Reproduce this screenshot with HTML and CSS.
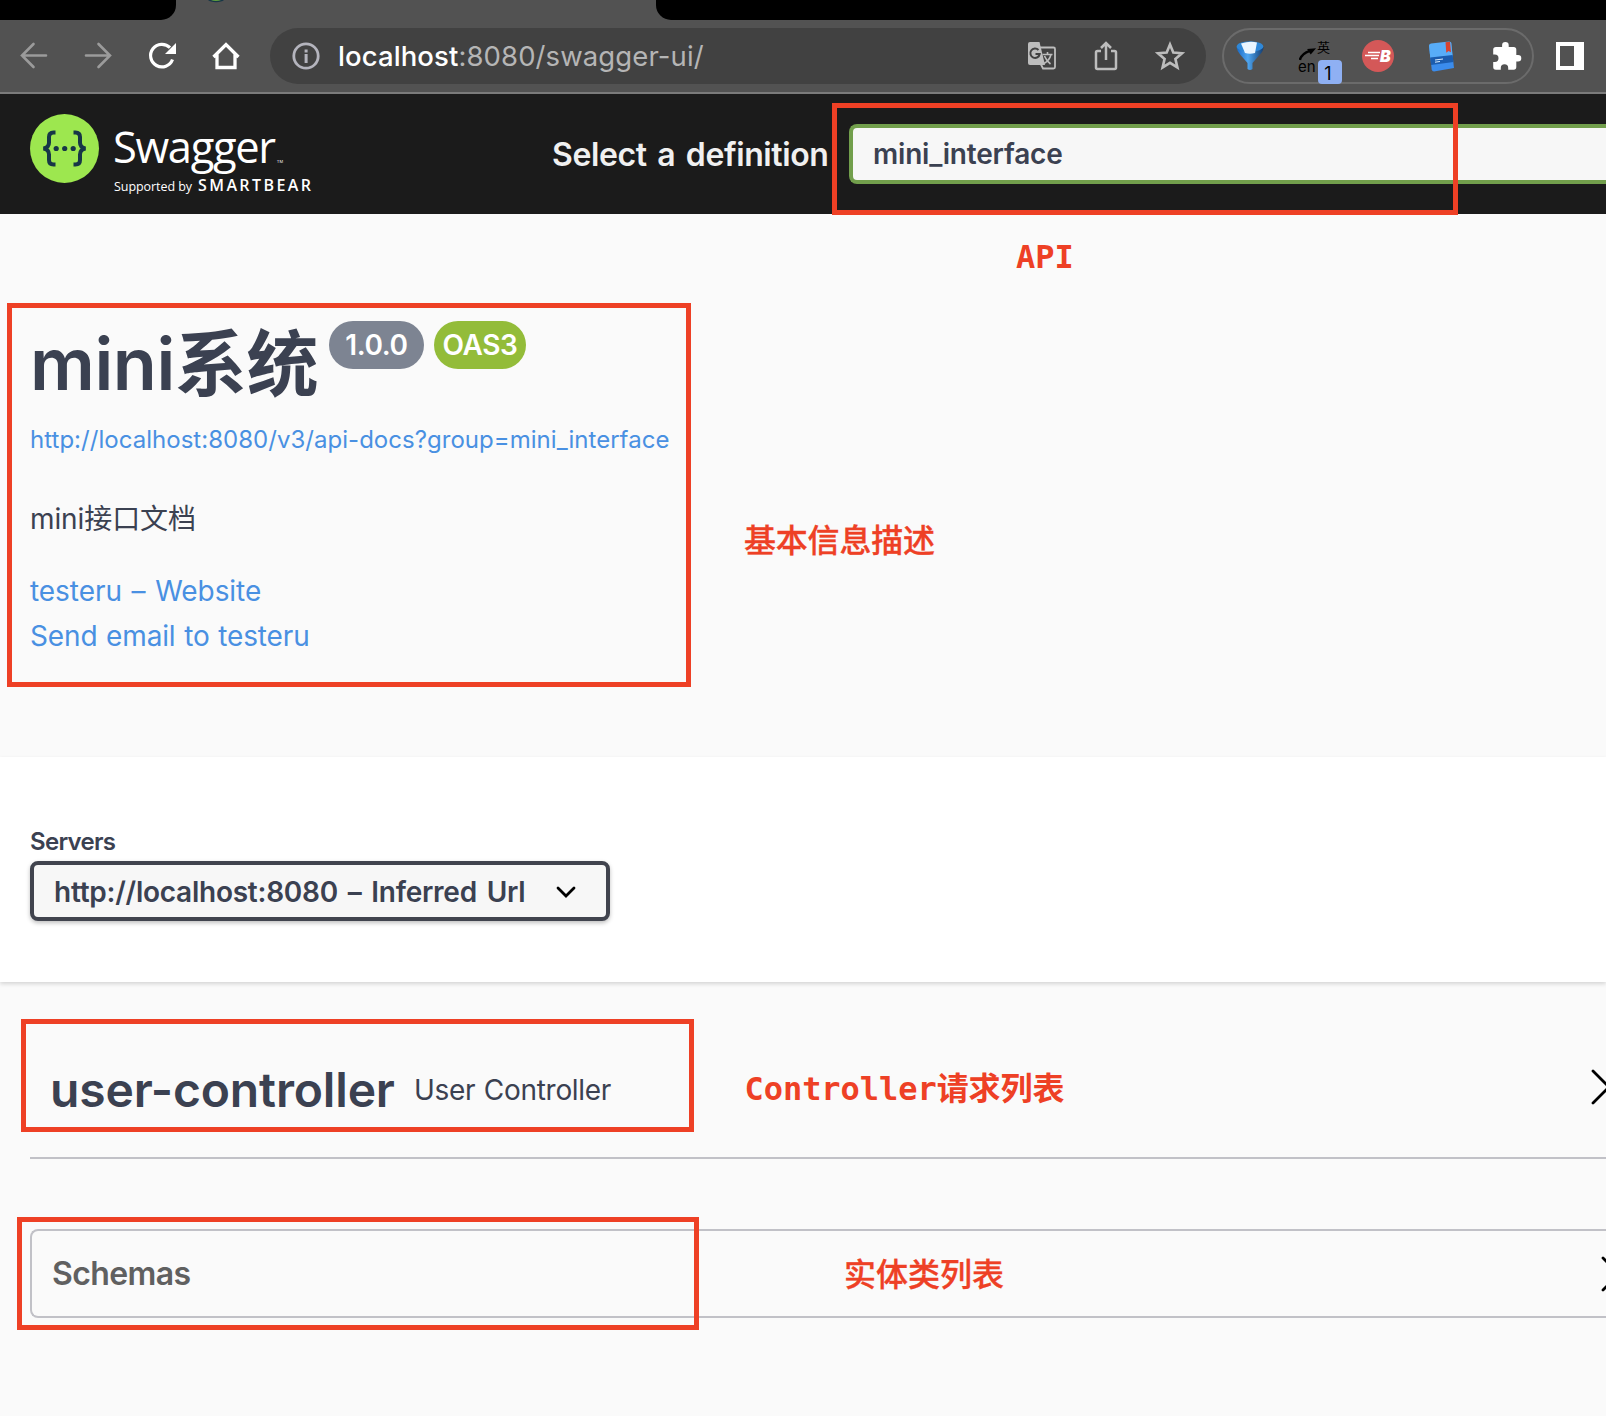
FILE: index.html
```
<!DOCTYPE html>
<html lang="zh-CN">
<head>
<meta charset="utf-8">
<title>Swagger UI</title>
<link rel="stylesheet" href="styles.css">
</head>
<body>
<header class="chrome">
  <div class="tabs">
    <div class="tab-prev"></div>
    <svg class="favicon" width="16" height="3" viewBox="0 0 16 3"><path d="M0 0a9 4 0 0 0 16 0z" fill="#173647"/><path d="M3 0a6 2 0 0 0 10 0z" fill="#62a03f"/></svg>
    <div class="tab-next"></div>
  </div>
  <div class="toolbar">
    <svg class="nav-icon dim" viewBox="0 0 32 32"><path d="M28 15.500H4M15.500 4L4 15.500 15.500 27"/></svg>
    <svg class="nav-icon dim" viewBox="0 0 32 32"><path d="M4 15.500h24M16.500 4L28 15.500 16.500 27"/></svg>
    <svg class="nav-icon" viewBox="0 0 32 32"><path d="M26.500 19.500a11.300 11.300 0 1 1-2.500-11.800" stroke-width="3.200"/><path d="M30 3v11H19z" fill="#fff" stroke="none"/></svg>
    <svg class="nav-icon" viewBox="0 0 32 32"><path d="M3.500 17L16 4.500 28.500 17M7 14v13.500h18V14" stroke-width="3.300"/></svg>
    <div class="address">
      <svg class="info-icon" viewBox="0 0 28 28"><circle cx="14" cy="14" r="12.200" fill="none" stroke="#b4b4bd" stroke-width="2.800"/><path d="M12.600 12h3v9h-3zM12.600 7.500h3v3h-3z" fill="#b4b4bd"/></svg>
      <div class="url"><b>localhost</b>:8080/swagger-ui/</div>
      <svg class="act" viewBox="0 0 32 32"><path d="M13 7.500h14.500q1.500 0 1.500 1.500v18q0 1.500-1.500 1.500H17l-3-6" fill="none" stroke="#bdbdbd" stroke-width="1.800"/><path d="M4 2h9.500l5.500 23H4q-2 0-2-2V4q0-2 2-2z" fill="#bdbdbd"/><path d="M12.500 10a4.700 4.700 0 1 0 1.200 4H9.500" fill="none" stroke="#414141" stroke-width="2"/><path d="M16.500 14.500h10M21.500 12v2.500M25 14.500q-1.500 6-7 9M18.500 16q2 5 6 8" fill="none" stroke="#bdbdbd" stroke-width="1.600"/></svg>
      <svg class="act" viewBox="0 0 32 32"><g fill="none" stroke="#bdbdbd" stroke-width="2.500"><path d="M11 11H7.500q-1.500 0-1.500 1.500v15Q6 29 7.500 29h17q1.500 0 1.500-1.500v-15Q26 11 24.500 11H21M16 20V3.500M11 8l5-5 5 5"/></g></svg>
      <svg class="act" viewBox="0 0 32 32"><path d="M16 4.500l3.300 8 8.700.7-6.600 5.700 2 8.500-7.400-4.600-7.400 4.600 2-8.500L4 13.200l8.700-.7z" fill="none" stroke="#bdbdbd" stroke-width="2.600"/></svg>
    </div>
    <div class="extensions">
      <svg class="ext" viewBox="0 0 32 32"><defs><linearGradient id="fn" x1="0" x2="1"><stop offset="0" stop-color="#1667c4"/><stop offset=".42" stop-color="#4fa6f0"/><stop offset="1" stop-color="#123e75"/></linearGradient></defs><path d="M2.500 7q.5 4 4 8l7 8v6q2.500 2 5 0v-6l7-8q4-4 4-8z" fill="url(#fn)"/><ellipse cx="16" cy="6.500" rx="13.300" ry="5.200" fill="#2f88d8"/><path d="M7 3.500Q16 .5 23 2.500l-2 10.500q-5 1.500-10 0z" fill="#e9f5ff"/></svg>
      <div class="translator"><span class="zh">英</span><span class="en">en</span><svg viewBox="0 0 20 16"><path d="M1 14Q3 7 12 4" fill="none" stroke="#000" stroke-width="2.800"/><path d="M19 1L9 2l4 6z"/></svg><span class="count">1</span></div>
      <svg class="ext" viewBox="0 0 32 32"><circle cx="16" cy="16" r="16" fill="#d45858"/><path d="M6 12.500h12M3 15.500h14M9 18.500h7" stroke="#fff" stroke-width="1.700"/><text x="18" y="22" class="bmark">B</text></svg>
      <svg class="ext" viewBox="0 0 32 32"><path d="M3 5.500L25 2l3 26L8 31.500q-2 0-2.300-2z" fill="#3b8cec"/><path d="M3 5.500Q3 4 5 3.500L23 1.500q2 0 2.300 1.500l1.300 13L4.300 18z" fill="#58adf8"/><path d="M4.200 17.500L26.600 15l.9 7L5 25z" fill="#1b5cae"/><path d="M19.500 2.300l4.500-.6 1 10.500-2.500-1.200-2.200 1.700z" fill="#d8432f"/><path d="M9 20l8-1M9 22.200l5-.7" stroke="#d9ecff"/></svg>
      <svg class="ext" viewBox="0 0 32 32"><path d="M28 15h-1.700V9.500q0-2.500-2.600-2.500H18.700V5.200a3.300 3.300 0 0 0-6.600 0V7H6Q3.200 7 3.200 9.500v5h1.600a3.700 3.700 0 0 1 0 7.400H3.200V27q0 2.700 2.600 2.700h5V28a3.700 3.700 0 0 1 7.400 0v1.700h5.500q2.600 0 2.600-2.700v-5.400H28a3.300 3.300 0 0 0 0-6.600z" fill="#fff"/></svg>
    </div>
    <svg class="panel" viewBox="0 0 28 28"><path d="M0 0h28v28H0zM4 4v20h14V4z" fill="#fff" fill-rule="evenodd"/></svg>
  </div>
</header>

<nav class="topbar">
  <svg class="logo" width="290" height="84" viewBox="0 0 290 84">
    <circle cx="34.500" cy="36.500" r="34.500" fill="#9de74f"/>
    <path d="M25.500 20.500h-2q-4.500 0-4.500 4.500v5.500q0 5-5.500 6 5.500 1 5.500 6V48q0 4.500 4.500 4.500h2M43.500 20.500h2q4.500 0 4.500 4.500v5.500q0 5 5.500 6-5.500 1-5.500 6V48q0 4.500-4.500 4.500h-2" fill="none" stroke="#173647" stroke-width="4"/>
    <g fill="#173647"><circle cx="26.200" cy="36.500" r="2.600"/><circle cx="34.700" cy="36.500" r="2.600"/><circle cx="43.200" cy="36.500" r="2.600"/></g>
    <text x="83" y="50.500" class="brand" textLength="163">Swagger</text>
    <text x="247" y="50.500" class="tm" textLength="6">TM</text>
    <text x="84" y="78.500" class="support" textLength="78">Supported by</text>
    <text x="168" y="78.500" class="bear" textLength="113">SMARTBEAR</text>
  </svg>
  <label class="pick">Select a definition</label>
  <div class="definition">mini_interface</div>
</nav>

<main>
  <section class="info">
    <div class="title-row">
      <h1>mini系统</h1>
      <span class="badge version">1.0.0</span>
      <span class="badge oas">OAS3</span>
    </div>
    <a class="docs">http://localhost:8080/v3/api-docs?group=mini_interface</a>
    <p class="desc">mini接口文档</p>
    <a class="contact site">testeru – Website</a>
    <a class="contact mail">Send email to testeru</a>
  </section>
  <section class="servers">
    <label class="servers-label">Servers</label>
    <div class="server-select"><span>http://localhost:8080 – Inferred Url</span>
      <svg width="20" height="12" viewBox="0 0 20 12"><path d="M2 2l8 8 8-8" fill="none" stroke="#000" stroke-width="2.800" stroke-linecap="round"/></svg>
    </div>
  </section>
  <section class="operations">
    <div class="tag"><h2>user-controller</h2><small>User Controller</small>
      <svg class="arrow" width="15" height="36" viewBox="0 0 15 36"><path d="M2 2l16 16L2 34" fill="none" stroke="#000" stroke-width="2.800" stroke-linecap="round"/></svg>
    </div>
    <div class="models"><h3>Schemas</h3>
      <svg width="5" height="36" viewBox="0 0 5 36"><path d="M2 2l16 16L2 34" fill="none" stroke="#000" stroke-width="2.800" stroke-linecap="round"/></svg>
    </div>
  </section>
</main>

<div class="mark mark-api"></div>
<div class="mark mark-info"></div>
<div class="mark mark-tag"></div>
<div class="mark mark-models"></div>
<div class="note note-api">API</div>
<div class="note note-info">基本信息描述</div>
<div class="note note-tag">Controller请求列表</div>
<div class="note note-models">实体类列表</div>
</body>
</html>
```
FILE: styles.css
```
* { box-sizing: border-box; }
body {
  margin: 0;
  position: relative;
  width: 1606px;
  height: 1416px;
  overflow: hidden;
  background: #fafafa;
  color: #3b4151;
  font-family: Inter, "Noto Sans CJK SC", sans-serif;
  white-space: nowrap;
}
h1, h2, h3, p { margin: 0; }
svg { flex: none; display: block; }

/* browser chrome */
.chrome { height: 94px; background: #525252; border-bottom: 2px solid #7b7b7b; }
.tabs { display: flex; height: 20px; }
.tab-prev { width: 176px; background: #000; border-bottom-right-radius: 15px; }
.favicon { margin: 0 432px 0 32px; width: 16px; height: 3px; }
.tab-next { flex: 1; background: #000; border-bottom-left-radius: 15px; }
.toolbar { display: flex; align-items: center; height: 72px; padding-left: 18px; }
.nav-icon { width: 32px; height: 32px; margin-right: 32px; fill: none; stroke: #fff; stroke-width: 2.6; }
.nav-icon:nth-child(4) { margin-right: 28px; }
.dim { stroke: #9b9b9b; stroke-linecap: round; }
.address { display: flex; align-items: center; width: 936px; height: 56px; padding: 0 20px 0 22px; border-radius: 28px; background: #414141; }
.info-icon { width: 28px; height: 28px; margin-right: 18px; }
.url { flex: 1; font-size: 27.500px; line-height: 56px; letter-spacing: .1px; color: #b5b5b5; }
.url b { font-weight: 500; color: #fff; }
.act { width: 32px; height: 32px; margin-left: 32px; }
.extensions { display: flex; align-items: center; gap: 32px; width: 312px; height: 56px; margin-left: 16px; padding-left: 10px; border: 2px solid #6b6b6b; border-radius: 28px; }
.ext { width: 32px; height: 32px; }
.translator { position: relative; width: 32px; height: 32px; color: #000; }
.translator span, .translator svg { position: absolute; }
.translator svg { width: 18px; height: 15px; left: 1px; top: 7px; }
.translator .zh { left: 19px; top: 1px; font-size: 13px; line-height: 13px; }
.translator .en { left: 0; top: 18px; font-size: 15px; line-height: 17px; }
.translator .count { left: 20px; top: 20px; width: 24px; height: 24px; padding-right: 4px; border-radius: 4px; background: #8fb0f3; font-size: 18px; line-height: 27px; text-align: center; }
.bmark { font: italic 900 16px Inter, sans-serif; fill: #fff; }
.panel { width: 28px; height: 28px; margin-left: 22px; }

/* top bar */
.topbar { display: flex; align-items: center; height: 120px; padding-left: 30px; background: #1b1b1b; }
.logo { align-self: flex-start; margin-top: 17.500px; }
.brand { font: 400 43.500px "Open Sans", sans-serif; fill: #fff; }
.tm { font: 400 4px "Open Sans", sans-serif; fill: #fff; }
.support { font: 400 12.500px "Open Sans", sans-serif; fill: #fff; }
.bear { font: 600 16px "Open Sans", sans-serif; fill: #fff; }
.pick { flex: none; width: 297px; margin-left: 232px; font-size: 32px; font-weight: 600; letter-spacing: -.4px; word-spacing: 3px; color: #f0f0f0; }
.definition { flex: 1; height: 60px; padding-left: 20px; border: 4px solid #729f4c; border-right: 0; border-radius: 8px 0 0 8px; background: #f7f7f7; font-size: 28px; font-weight: 600; letter-spacing: -.2px; line-height: 53px; }

/* API description */
.info { display: flex; flex-direction: column; height: 543px; padding: 107px 0 0 30px; }
.title-row { display: flex; height: 86px; }
h1 { width: 299px; font-size: 72px; font-weight: 600; line-height: 86px; letter-spacing: -.4px; }
.badge { height: 48px; border-radius: 24px; color: #fff; font-size: 28px; font-weight: 600; line-height: 48px; letter-spacing: -.4px; text-align: center; }
.version { width: 95px; background: #7d8492; }
.oas { width: 92px; margin-left: 10px; background: #93bc39; }
.docs { margin-top: 18px; font-size: 24px; line-height: 30px; letter-spacing: .03px; color: #4990e2; }
.desc { margin-top: 44px; font-size: 28px; line-height: 40px; letter-spacing: -.1px; }
.contact { font-size: 28px; line-height: 45px; color: #4990e2; }
.site { margin-top: 30px; letter-spacing: -.05px; word-spacing: 1.800px; }
.mail { letter-spacing: -.15px; word-spacing: 1px; }

/* servers */
.servers { height: 225px; padding: 70px 0 0 30px; background: #fff; box-shadow: 0 2px 4px rgba(0, 0, 0, .15); }
.servers-label { display: block; font-size: 24px; font-weight: 600; line-height: 30px; height: 34px; letter-spacing: -.7px; }
.server-select { display: flex; align-items: center; justify-content: space-between; width: 580px; height: 60px; padding: 1px 30px 0 20px; border: 4px solid #41444e; border-radius: 8px; background: #f7f7f7; box-shadow: 0 2px 4px rgba(0, 0, 0, .25); font-size: 28px; font-weight: 600; letter-spacing: -.25px; word-spacing: 3px; }

/* operations */
.operations { padding: 37px 0 0 30px; }
.tag { display: flex; align-items: center; height: 140px; padding: 3px 0 0 20px; border-bottom: 2px solid #c1c1c7; }
h2 { width: 364px; font-size: 48px; font-weight: 600; letter-spacing: -.15px; }
small { flex: 1; font-size: 28px; letter-spacing: -.3px; word-spacing: 1px; }
.arrow { margin-bottom: 5px; }
.models { display: flex; align-items: center; justify-content: space-between; height: 89px; margin-top: 70px; padding-left: 20px; border: 2px solid #c1c1c7; border-right: 0; border-radius: 8px 0 0 8px; }
h3 { font-size: 32px; font-weight: 600; letter-spacing: -.6px; color: #606060; }

/* annotations over the page */
.mark { position: absolute; border: 5px solid #ee4025; }
.mark-api { left: 832px; top: 103px; width: 626px; height: 112px; }
.mark-info { left: 7px; top: 303px; width: 684px; height: 384px; }
.mark-tag { left: 21px; top: 1019px; width: 673px; height: 113px; }
.mark-models { left: 17px; top: 1217px; width: 682px; height: 113px; }
.note { position: absolute; color: #ee4025; font: 700 32px/40px "DejaVu Sans Mono", "Noto Sans CJK SC", monospace; }
.note-api { left: 1016px; top: 237px; }
.note-info { left: 744px; top: 521px; font-weight: 500; letter-spacing: -.2px; -webkit-text-stroke: .3px #ee4025; }
.note-tag { left: 744.500px; top: 1069px; letter-spacing: -.05px; }
.note-models { left: 844px; top: 1255px; font-weight: 500; -webkit-text-stroke: .3px #ee4025; }
```
